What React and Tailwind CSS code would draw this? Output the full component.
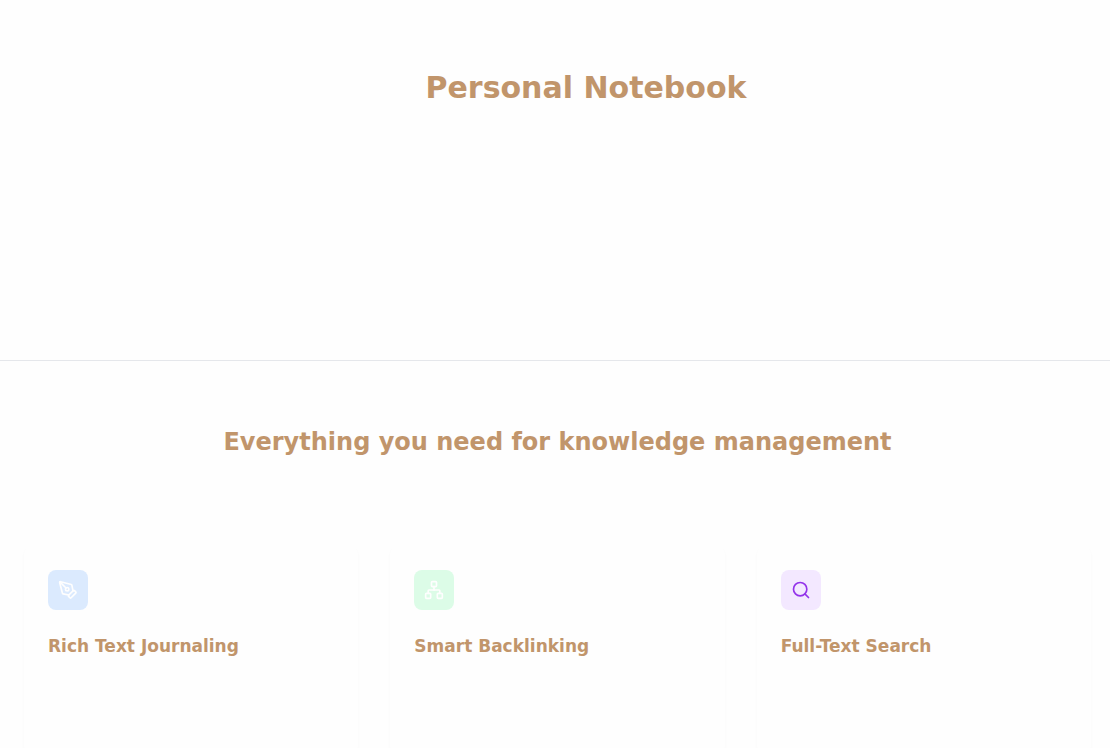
import { PenTool, Network, Search } from "lucide-react";

const features = [
  { title: "Rich Text Journaling", icon: PenTool, tile: "bg-[#dbeafe]", color: "text-[#fefefe]" },
  { title: "Smart Backlinking", icon: Network, tile: "bg-[#dcfce7]", color: "text-[#fefefe]" },
  { title: "Full-Text Search", icon: Search, tile: "bg-[#f3e8ff]", color: "text-[#9333ea]" },
];

function FeatureCard({ title, icon: Icon, tile, color }) {
  return (
    <article className="min-h-52 rounded-lg bg-[#fefefe] p-6 shadow-[0_2px_3px_rgba(0,0,0,0.03)]">
      <div className={`mb-6 flex size-10 items-center justify-center rounded-lg ${tile}`}>
        <Icon className={`size-5 ${color}`} strokeWidth={2} aria-hidden="true" />
      </div>
      <h3 className="text-[17px] leading-6 font-semibold">{title}</h3>
    </article>
  );
}

export default function App() {
  return (
    <div className="min-h-screen overflow-hidden bg-[#fefefe] font-['DejaVu_Sans',sans-serif] text-[#c1956b]">
      <header className="min-h-90 pt-16 pl-[62px] text-center">
        <h1 className="text-3xl leading-12 font-bold">Personal Notebook</h1>
      </header>
      <main className="border-t border-gray-200 pt-[65px] pr-[19px] pl-6">
        <h2 className="mb-22 text-center text-2xl leading-8 font-bold">
          Everything you need for knowledge management
        </h2>
        <section className="grid grid-cols-3 gap-8">
          {features.map((feature) => (
            <FeatureCard key={feature.title} {...feature} />
          ))}
        </section>
      </main>
    </div>
  );
}
